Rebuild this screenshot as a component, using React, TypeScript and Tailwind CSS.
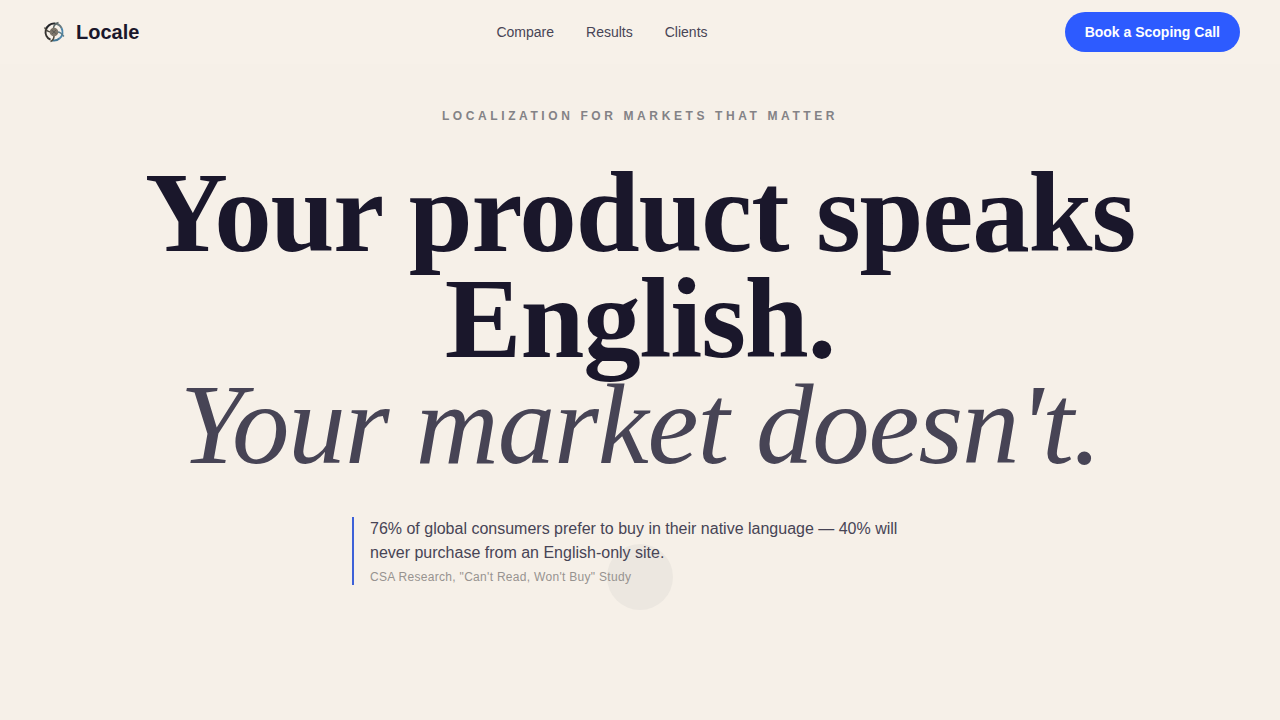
const links = [
  { label: "Compare", href: "#compare" },
  { label: "Results", href: "#results" },
  { label: "Clients", href: "#clients" },
];

function Logo() {
  return (
    <svg className="size-7" viewBox="0 0 28 28" fill="none" aria-hidden="true">
      <path d="M10.5 21.7A8.5 8.5 0 0 1 5.8 12" stroke="#35332f" strokeWidth="2" />
      <path d="M5.8 12A8.5 8.5 0 0 1 15 5.6" stroke="#25262a" strokeWidth="2" />
      <path d="M15 5.600A8.500 8.500 0 0 1 21.500 10" stroke="#66777c" strokeWidth="2" />
      <path d="M21.500 10A8.500 8.500 0 0 1 19.700 20.300" stroke="#4d86ab" strokeWidth="2" />
      <path d="M19.700 20.300A8.500 8.500 0 0 1 12 22.300" stroke="#427796" strokeWidth="2" />
      <path d="M4.500 9.500Q7 14 11 14" stroke="#4a463d" strokeWidth="1.500" />
      <path d="M18.500 4.500Q14 6 13.500 10" stroke="#5b6664" strokeWidth="1.500" />
      <path d="M23.800 18.500Q21 14 17.500 14" stroke="#5c7e8a" strokeWidth="1.500" />
      <path d="M10.500 23.500Q14 22 14 18" stroke="#4f4a3d" strokeWidth="1.500" />
      <circle cx="14" cy="14" r="4.300" fill="#7d766a" />
      <path d="M11.500 12l5 4M12 16l4-4" stroke="#5f5c55" strokeWidth="1" />
    </svg>
  );
}

export default function App() {
  return (
    <div className="min-h-screen bg-[#f6f0e8] font-['Liberation_Sans',Arial,sans-serif] text-[#1a172b]">
      <header className="flex h-16 items-center justify-between bg-[#f7f1e9] px-10">
        <a className="flex items-center gap-2 text-xl font-bold" href="#top">
          <Logo />
          Locale
        </a>
        <nav className="flex gap-8 text-sm text-[#474455]">
          {links.map((link) => (
            <a key={link.href} href={link.href}>
              {link.label}
            </a>
          ))}
        </nav>
        <a
          className="rounded-full bg-[#2d5bff] px-5 py-2.5 text-sm font-bold text-white"
          href="#book"
        >
          Book a Scoping Call
        </a>
      </header>

      <main className="flex flex-col items-center px-10 pt-11" id="top">
        <p className="text-center text-xs font-bold uppercase tracking-[0.3em] text-[#838286]">
          Localization for markets that matter
        </p>
        <h1 className="mt-9 max-w-5xl text-center font-['Liberation_Serif','Times_New_Roman',serif] text-[115px] leading-[106px] font-bold tracking-[-0.01em]">
          Your product speaks English.
          <em className="block font-normal text-[#474455]">Your market doesn't.</em>
        </h1>
        <div className="relative mt-[39px] w-full max-w-xl">
          <span className="absolute top-[27px] left-1/2 size-[66px] -translate-x-1/2 rounded-full bg-[#ece7e0]" />
          <blockquote className="relative border-l-2 border-[#3d61d8] pl-4 text-base text-[#474455]">
            <p>
              76% of global consumers prefer to buy in their native language — 40% will never
              purchase from an English-only site.
            </p>
            <cite className="mt-1 block text-xs tracking-wide text-[#979390] not-italic">
              CSA Research, "Can't Read, Won't Buy" Study
            </cite>
          </blockquote>
        </div>
      </main>
    </div>
  );
}
